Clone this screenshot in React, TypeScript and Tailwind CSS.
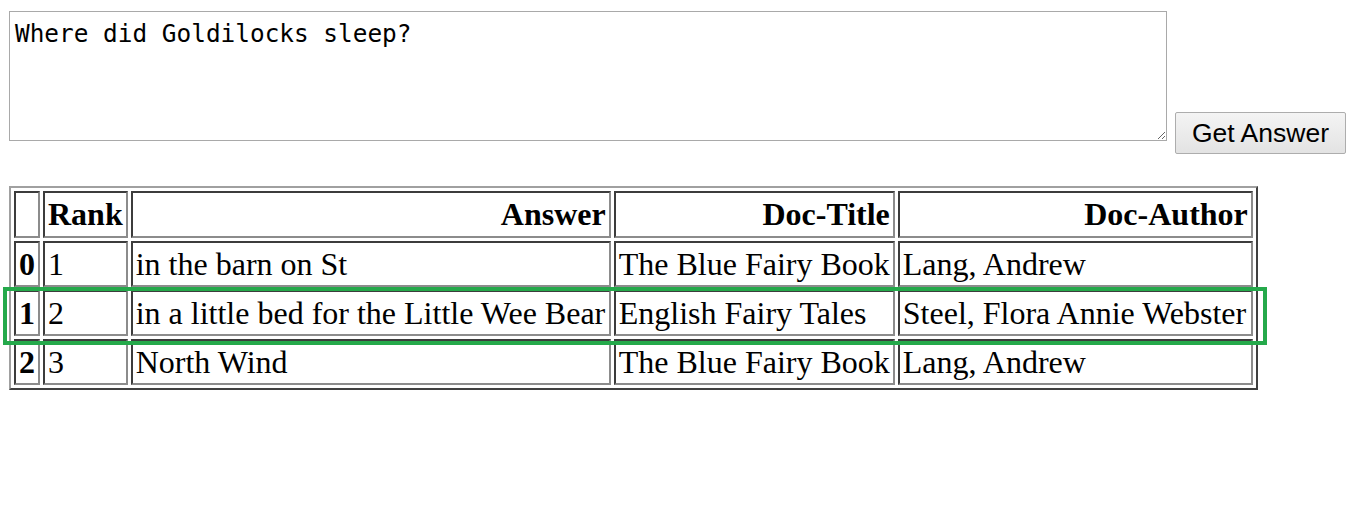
import React from 'react'

const rows = [
  { rank: 1, answer: 'in the barn on St', title: 'The Blue Fairy Book', author: 'Lang, Andrew' },
  { rank: 2, answer: 'in a little bed for the Little Wee Bear', title: 'English Fairy Tales', author: 'Steel, Flora Annie Webster' },
  { rank: 3, answer: 'North Wind', title: 'The Blue Fairy Book', author: 'Lang, Andrew' },
]

const cell =
  'border-2 border-t-[#3c3c3c] border-l-[#3c3c3c] border-b-[#8c8c8c] border-r-[#8c8c8c] px-[3px] py-0 align-middle whitespace-nowrap'

export default function App() {
  return (
    <div className="relative min-h-[506px] bg-white pl-[9px] pt-[11px] text-black">
      <div className="flex items-start">
        <textarea
          defaultValue="Where did Goldilocks sleep?"
          className="h-[130px] w-[1158px] border border-[#a9a9a9] bg-white px-[5px] pt-[7px] text-[24.4px] leading-[1.2] text-black outline-none"
          style={{ fontFamily: '"DejaVu Sans Mono", "Liberation Mono", monospace' }}
        />
        <button
          className="ml-[8px] mt-[101px] h-[42px] w-[171px] rounded-[2px] border border-[#adadad] bg-gradient-to-b from-[#f4f4f4] to-[#e3e3e3] text-[26.5px] leading-none text-black"
          style={{ fontFamily: '"Liberation Sans", Arial, sans-serif' }}
        >
          Get Answer
        </button>
      </div>

      <table
        className="mt-[32px] border-separate border-spacing-[3px] border-2 border-t-[#a0a0a0] border-l-[#a0a0a0] border-b-[#404040] border-r-[#404040] text-[32px] leading-[1.15]"
        style={{ fontFamily: '"Liberation Serif", "Times New Roman", serif' }}
      >
        <thead>
          <tr className="text-right">
            <th className={`${cell} h-[47px] w-[25px]`}></th>
            <th className={`${cell} w-[83px]`}>Rank</th>
            <th className={`${cell} w-[480px]`}>Answer</th>
            <th className={`${cell} w-[281px]`}>Doc-Title</th>
            <th className={`${cell} w-[355px]`}>Doc-Author</th>
          </tr>
        </thead>
        <tbody>
          {rows.map((r, i) => (
            <tr key={i}>
              <th className={`${cell} h-[46px] text-center font-bold`}>{i}</th>
              <td className={`${cell} text-left`}>{r.rank}</td>
              <td className={`${cell} text-left`}>{r.answer}</td>
              <td className={`${cell} text-left`}>{r.title}</td>
              <td className={`${cell} text-left`}>{r.author}</td>
            </tr>
          ))}
        </tbody>
      </table>

      <div className="pointer-events-none absolute left-[3px] top-[287px] h-[58px] w-[1264px] border-4 border-[#25a94b]" />
    </div>
  )
}
